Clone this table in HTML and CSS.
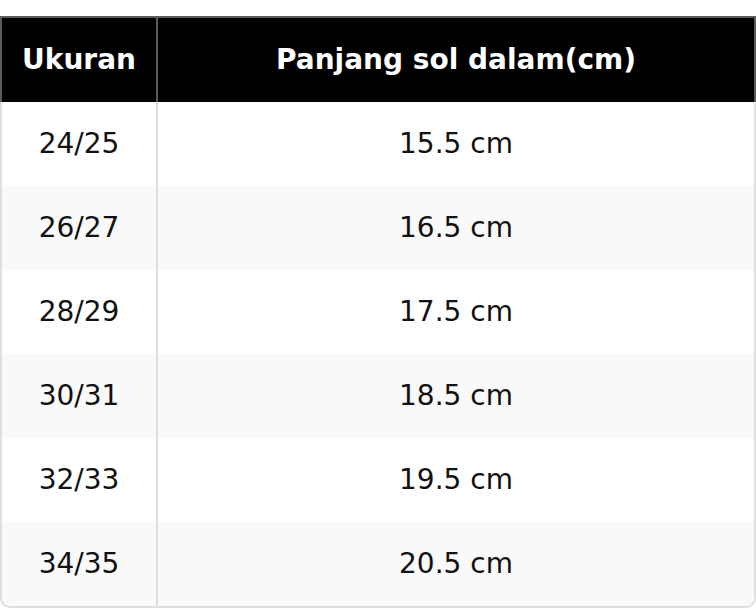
FILE: index.html
```html
<!DOCTYPE html>
<html>
<head>
<meta charset="utf-8">
<link rel="stylesheet" href="styles.css">
</head>
<body>
<div class="table">
  <div class="row head">
    <div class="cell first">Ukuran</div>
    <div class="cell">Panjang sol dalam(cm)</div>
  </div>
  <div class="row"><div class="cell first">24/25</div><div class="cell">15.5 cm</div></div>
  <div class="row alt"><div class="cell first">26/27</div><div class="cell">16.5 cm</div></div>
  <div class="row"><div class="cell first">28/29</div><div class="cell">17.5 cm</div></div>
  <div class="row alt"><div class="cell first">30/31</div><div class="cell">18.5 cm</div></div>
  <div class="row"><div class="cell first">32/33</div><div class="cell">19.5 cm</div></div>
  <div class="row alt last"><div class="cell first">34/35</div><div class="cell">20.5 cm</div></div>
</div>
</body>
</html>
```

FILE: styles.css
```css
html, body {
  margin: 0;
  padding: 0;
  background: #fff;
}
body {
  font-family: "DejaVu Sans", Verdana, sans-serif;
  font-size: 28px;
  color: #111;
}
.table {
  margin-top: 16px;
  width: 756px;
  box-sizing: border-box;
  border: 2px solid #dedede;
  border-top: 0;
  border-radius: 0 0 10px 10px;
}
.row {
  display: grid;
  grid-template-columns: 156px 1fr;
  height: 84px;
  background: #fff;
}
.row.alt {
  background: #f9f9f9;
}
.row.last {
  border-radius: 0 0 8px 8px;
}
.cell {
  display: flex;
  align-items: center;
  justify-content: center;
  box-sizing: border-box;
  padding-bottom: 2px;
}
.cell.first {
  border-right: 2px solid #dedede;
}
.row.head {
  margin: 0 -2px;
  height: 86px;
  box-sizing: border-box;
  border: 2px solid #5a5a5a;
  border-bottom: 0;
  background: #000;
  color: #fff;
  font-weight: bold;
}
.row.head .cell.first {
  border-right-color: #5a5a5a;
}
```
